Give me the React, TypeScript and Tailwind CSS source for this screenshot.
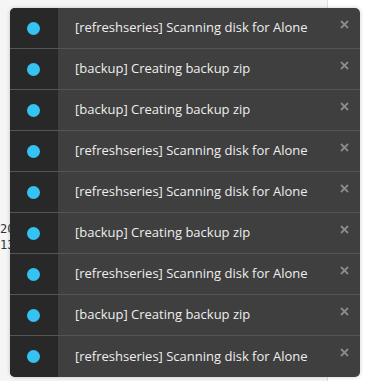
import React from "react";

const items = [
  "[refreshseries] Scanning disk for Alone",
  "[backup] Creating backup zip",
  "[backup] Creating backup zip",
  "[refreshseries] Scanning disk for Alone",
  "[refreshseries] Scanning disk for Alone",
  "[backup] Creating backup zip",
  "[refreshseries] Scanning disk for Alone",
  "[backup] Creating backup zip",
  "[refreshseries] Scanning disk for Alone",
];

export default function App() {
  return (
    <div className="relative w-[368px] h-[381px] overflow-hidden flex bg-white">
      <div className="w-[328px] h-full bg-[#f5f5f5] border-r border-[#dddddd] relative">
        <div className="pt-[221px] pl-0 font-['DejaVu_Sans_Mono',monospace] text-[12px] leading-[16px] text-[#333]">
          <div>20</div>
          <div>13</div>
        </div>
      </div>
      <div className="flex-1" />
      <div className="absolute left-[10px] top-[8px] w-[350px] rounded-[5px] overflow-hidden bg-[#3f3f3f] font-['Open_Sans',sans-serif] shadow-[0_0_4px_rgba(0,0,0,0.2)]">
        {items.map((t, i) => (
          <div
            key={i}
            className={`flex h-[41px] ${i < items.length - 1 ? "border-b border-[#555555]" : "h-[40px]"}`}
          >
            <div className="w-[48px] bg-[#282828] flex items-center justify-center pr-[2px]">
              <div className="w-[13px] h-[13px] rounded-full bg-[#35c3f4]" />
            </div>
            <div className="flex-1 flex items-center pl-[17px] text-[13px] text-[#eeeeee]">
              {t}
            </div>
            <div className="w-[30px] flex items-start justify-center pt-[12px] pr-[2px]">
              <svg width="9" height="9" viewBox="0 0 9 9">
                <path d="M1 1L8 8M8 1L1 8" stroke="#8a8a8a" strokeWidth="1.8" strokeLinecap="butt" />
              </svg>
            </div>
          </div>
        ))}
      </div>
    </div>
  );
}
